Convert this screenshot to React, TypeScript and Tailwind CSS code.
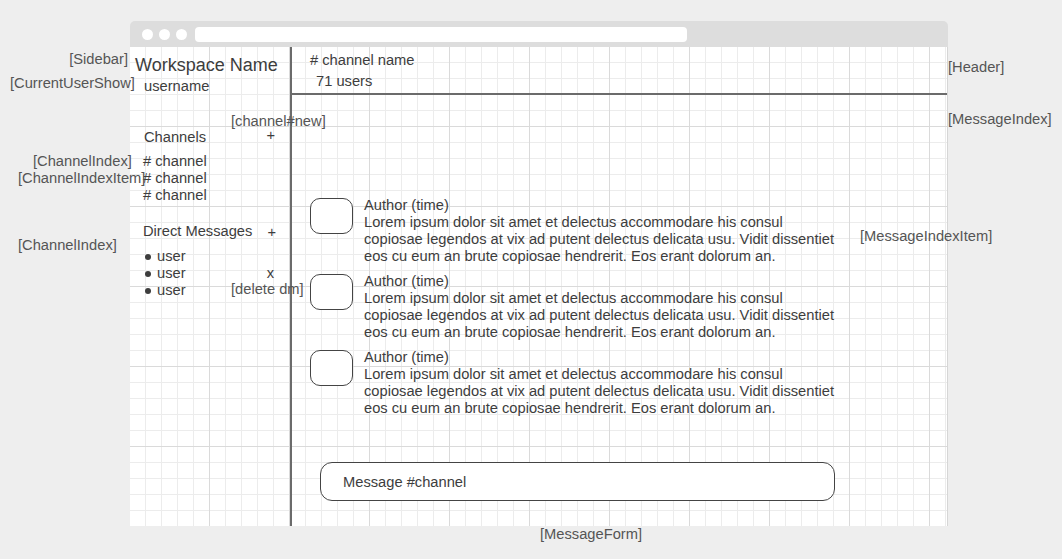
import React from "react";

const font = "font-['Liberation_Sans',Arial,sans-serif]";

const lorem = [
  "Lorem ipsum dolor sit amet et delectus accommodare his consul",
  "copiosae legendos at vix ad putent delectus delicata usu. Vidit dissentiet",
  "eos cu eum an brute copiosae hendrerit. Eos erant dolorum an.",
];

function Note({ className, children }: { className: string; children: React.ReactNode }) {
  return (
    <div className={`absolute text-[14.7px] leading-[17px] text-[#555] whitespace-nowrap ${className}`}>
      {children}
    </div>
  );
}

function MessageItem() {
  return (
    <div className="flex gap-[11px]">
      <div className="mt-[0.5px] h-[36px] w-[43px] shrink-0 rounded-[10px] border border-[#444] bg-white" />
      <div className="text-[14.7px] leading-[17px] text-[#3d3d3d] whitespace-nowrap">
        <div>Author (time)</div>
        {lorem.map((l) => (
          <div key={l}>{l}</div>
        ))}
      </div>
    </div>
  );
}

function UserRow({ del }: { del?: boolean }) {
  return (
    <div className="flex items-center pr-[16px]">
      <span className="mr-[6px] h-[6px] w-[6px] rounded-full bg-[#3d3d3d]" />
      <span>user</span>
      {del && <span className="ml-auto">x</span>}
    </div>
  );
}

export default function App() {
  return (
    <div className={`relative h-[559px] w-full overflow-hidden bg-[#eeeeee] ${font}`}>
      <div className="pl-[130px] pt-[21px]">
        <div className="flex h-[505px] w-[818px] flex-col">
          {/* browser chrome */}
          <div className="flex h-[26px] items-center rounded-t-[5px] bg-[#dddddd] pl-[12px]">
            <div className="flex gap-[6px]">
              <span className="h-[11px] w-[11px] rounded-full bg-white" />
              <span className="h-[11px] w-[11px] rounded-full bg-white" />
              <span className="h-[11px] w-[11px] rounded-full bg-white" />
            </div>
            <div className="ml-[8px] h-[15px] w-[492px] rounded-[4px] bg-white" />
          </div>

          {/* canvas */}
          <div className="flex flex-1 border-r border-[#d6d6d6] bg-white [background-image:linear-gradient(to_right,#dadada_1px,transparent_1px),linear-gradient(to_bottom,#dadada_1px,transparent_1px),linear-gradient(to_right,#ececec_1px,transparent_1px),linear-gradient(to_bottom,#ececec_1px,transparent_1px)] [background-size:80px_80px,80px_80px,16px_16px,16px_16px] [background-position:-1px_-1px]">
            {/* sidebar */}
            <div className="w-[162px] shrink-0 border-r-2 border-[#6b6b6b] text-[#3d3d3d]">
              <div className="pl-[5px] pt-[7px] text-[18px] leading-[22px]">Workspace Name</div>
              <div className="pl-[14px] pt-[2px] text-[14.7px] leading-[17px]">username</div>

              <div className="mt-[34px] flex items-center pl-[14px] pr-[15px] text-[14.7px] leading-[17px]">
                <span>Channels</span>
                <span className="ml-auto -translate-y-[2px]">+</span>
              </div>
              <div className="mt-[7px] pl-[13px] text-[14.7px] leading-[17px]">
                <div># channel</div>
                <div># channel</div>
                <div># channel</div>
              </div>

              <div className="mt-[19px] flex items-center pl-[13px] pr-[14px] text-[14.7px] leading-[17px]">
                <span>Direct Messages</span>
                <span className="ml-auto translate-y-[1px]">+</span>
              </div>
              <div className="mt-[8px] pl-[15px] text-[14.7px] leading-[17px]">
                <UserRow />
                <UserRow del />
                <UserRow />
              </div>
            </div>

            {/* main */}
            <div className="flex flex-1 flex-col">
              <div className="h-[48px] border-b-2 border-[#6b6b6b] text-[14.7px] leading-[17px] text-[#3d3d3d]">
                <div className="pl-[18px] pt-[5px]"># channel name</div>
                <div className="pl-[24px] pt-[4px]">71 users</div>
              </div>

              <div className="flex flex-col gap-[8px] pl-[18px] pt-[102px]">
                <MessageItem />
                <MessageItem />
                <MessageItem />
              </div>

              <div className="mt-auto pb-[25px] pl-[28px]">
                <div className="flex h-[39px] w-[515px] items-center rounded-[12px] border border-[#444] bg-white pl-[22px] text-[14.7px] text-[#3d3d3d]">
                  <span className="translate-y-[1px]">Message #channel</span>
                </div>
              </div>
            </div>
          </div>
        </div>
      </div>

      {/* annotation labels */}
      <Note className="right-[934px] top-[51px]">[Sidebar]</Note>
      <Note className="left-[10px] top-[75px]">[CurrentUserShow]</Note>
      <Note className="left-[231px] top-[113px]">[channel#new]</Note>
      <Note className="left-[33px] top-[153px]">[ChannelIndex]</Note>
      <Note className="left-[18px] top-[170px]">[ChannelIndexItem]</Note>
      <Note className="left-[18px] top-[237px]">[ChannelIndex]</Note>
      <Note className="left-[231px] top-[281px]">[delete dm]</Note>
      <Note className="left-[948px] top-[59px]">[Header]</Note>
      <Note className="left-[948px] top-[111px]">[MessageIndex]</Note>
      <Note className="left-[860px] top-[228px]">[MessageIndexItem]</Note>
      <Note className="left-[540px] top-[526px]">[MessageForm]</Note>
    </div>
  );
}
